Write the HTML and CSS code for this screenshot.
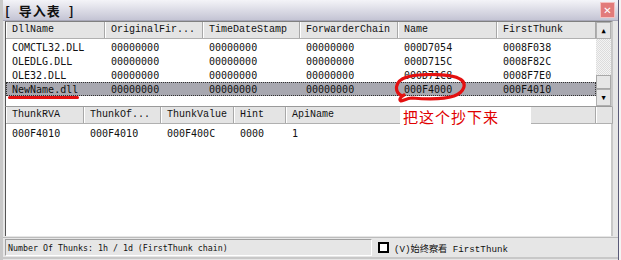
FILE: index.html
```html
<!DOCTYPE html>
<html lang="zh-CN">
<head>
    <meta charset="UTF-8">
    <title>导入表</title>
    <link rel="stylesheet" href="styles.css">
</head>
<body>
    <div class="window">
        <div class="titlebar">
            <span class="title">[&nbsp;&nbsp;导入表&nbsp;&nbsp;]</span>
            <span class="close">&#x2715;</span>
        </div>

        <div class="list top-list">
            <div class="grid dll-grid">
                <div class="row head">
                    <div class="cell">DllName</div>
                    <div class="cell">OriginalFir...</div>
                    <div class="cell">TimeDateStamp</div>
                    <div class="cell">ForwarderChain</div>
                    <div class="cell">Name</div>
                    <div class="cell">FirstThunk</div>
                </div>
                <div class="row">
                    <div class="cell">COMCTL32.DLL</div>
                    <div class="cell">00000000</div>
                    <div class="cell">00000000</div>
                    <div class="cell">00000000</div>
                    <div class="cell">000D7054</div>
                    <div class="cell">0008F038</div>
                </div>
                <div class="row">
                    <div class="cell">OLEDLG.DLL</div>
                    <div class="cell">00000000</div>
                    <div class="cell">00000000</div>
                    <div class="cell">00000000</div>
                    <div class="cell">000D715C</div>
                    <div class="cell">0008F82C</div>
                </div>
                <div class="row">
                    <div class="cell">OLE32.DLL</div>
                    <div class="cell">00000000</div>
                    <div class="cell">00000000</div>
                    <div class="cell">00000000</div>
                    <div class="cell">000D71C8</div>
                    <div class="cell">0008F7E0</div>
                </div>
                <div class="row selected">
                    <div class="cell">NewName.dll</div>
                    <div class="cell">00000000</div>
                    <div class="cell">00000000</div>
                    <div class="cell">00000000</div>
                    <div class="cell">000F4000</div>
                    <div class="cell">000F4010</div>
                </div>
            </div>
            <div class="scrollbar">
                <div class="sb-btn">&#x25B2;</div>
                <div class="sb-track"></div>
                <div class="sb-thumb"></div>
                <div class="sb-btn">&#x25BC;</div>
            </div>
        </div>

        <div class="list bottom-list">
            <div class="grid thunk-grid">
                <div class="row head">
                    <div class="cell">ThunkRVA</div>
                    <div class="cell">ThunkOf...</div>
                    <div class="cell">ThunkValue</div>
                    <div class="cell">Hint</div>
                    <div class="cell">ApiName</div>
                    <div class="cell"></div>
                </div>
                <div class="row">
                    <div class="cell">000F4010</div>
                    <div class="cell">000F4010</div>
                    <div class="cell">000F400C</div>
                    <div class="cell">0000</div>
                    <div class="cell">1</div>
                    <div class="cell"></div>
                </div>
            </div>
        </div>

        <div class="statusbar">
            <div class="status-text">Number Of Thunks: 1h / 1d (FirstThunk chain)</div>
            <span class="checkbox"></span>
            <span class="check-label">(V)始终察看 FirstThunk</span>
        </div>

        <!-- hand drawn notes on the screenshot -->
        <div class="note-line"></div>
        <svg class="note-circle" width="76" height="30" viewBox="0 0 76 30">
            <path d="M10 23 C2 19 2 8 15 4 C32 0 60 1 68 6 C75 10 73 19 62 23 C50 27 32 26 20 25 C15 25 11 28 9 28 C7 27 8 24 12 22"
                  fill="none" stroke="#e41010" stroke-width="3.2" stroke-linecap="round"/>
        </svg>
        <div class="note-text">把这个抄下来</div>
    </div>
</body>
</html>
```

FILE: styles.css
```css
body {
    margin: 0;
    padding: 0;
    width: 621px;
    height: 260px;
    overflow: hidden;
    background-color: #f4f4f4;
    font-family: 'DejaVu Sans Mono', 'Liberation Mono', 'Noto Sans CJK SC', monospace;
    font-size: 10px;
    color: #111;
}
.window {
    position: relative;
    width: 615px;
    height: 260px;
    background-color: #e6e6e6;
    border-left: 3px solid #c8c8c8;
    border-right: 1px solid #5a5a78;
    box-sizing: content-box;
}
.titlebar {
    height: 21px;
    display: flex;
    align-items: center;
    justify-content: space-between;
    background: linear-gradient(#f4f4f8, #c4c4d4);
    border-bottom: 1px solid #a8a8b8;
    box-sizing: border-box;
    padding: 0 2px 0 2px;
}
.title {
    font-family: 'Noto Sans CJK SC', sans-serif;
    font-weight: bold;
    font-size: 13px;
    letter-spacing: 1px;
    color: #111;
}
.close {
    width: 13px;
    height: 14px;
    background-color: #e27a7a;
    border: 1px solid #f4c0c0;
    color: #fff;
    font-size: 10px;
    font-weight: bold;
    font-family: 'DejaVu Sans', sans-serif;
    display: flex;
    align-items: center;
    justify-content: center;
    margin-right: 1px;
}
.list {
    margin-left: 2px;
    width: 608px;
    background-color: #fff;
    border-left: 1px solid #555;
    border-right: 2px solid #c8c8c8;
    box-sizing: border-box;
    display: flex;
}
.top-list {
    height: 85px;
    border-top: 1px solid #808080;
}
.bottom-list {
    height: 130px;
    border-top: 1px solid #9a9a9a;
}
.grid {
    flex: 1;
}
.row {
    display: grid;
    height: 14px;
    align-items: center;
}
.dll-grid .row {
    grid-template-columns: 99px 98px 97px 98px 99px 99px;
}
.thunk-grid .row {
    grid-template-columns: 78px 77px 73px 52px 310px 17px;
}
.row.head {
    height: 17px;
    background-color: #e4e4e4;
    border-bottom: 1px solid #b0b0b0;
    box-sizing: border-box;
    margin-bottom: 1px;
}
.head .cell {
    height: 16px;
    line-height: 16px;
    border-right: 1px solid #a8a8a8;
    box-shadow: inset 1px 0 #fff;
    font-family: 'Liberation Mono', monospace;
    font-size: 10px;
}
.cell {
    padding-left: 6px;
    white-space: nowrap;
    overflow: hidden;
}
.dll-grid .row:nth-child(2) {
    margin-top: 1px;
}
.thunk-grid .row:nth-child(2) {
    margin-top: 2px;
}
.row.selected {
    background-color: #a8a8b0;
    outline: 1px dotted #333;
    outline-offset: -1px;
}
.scrollbar {
    width: 17px;
    display: flex;
    flex-direction: column;
}
.sb-btn {
    height: 17px;
    background-color: #e6e6e6;
    border: 1px solid #b0b0b0;
    box-sizing: border-box;
    font-size: 7px;
    display: flex;
    align-items: center;
    justify-content: center;
    color: #000;
}
.sb-track {
    flex: 1;
    background-color: #eeeeee;
    background-image: repeating-conic-gradient(#dcdcdc 0 25%, #f4f4f4 0 50%);
    background-size: 2px 2px;
}
.sb-thumb {
    height: 14px;
    background-color: #e6e6e6;
    border: 1px solid #a8a8a8;
    box-sizing: border-box;
}
.statusbar {
    height: 22px;
    display: flex;
    align-items: center;
    padding-left: 2px;
    border-top: 1px solid #bcbcbc;
    border-bottom: 2px solid #c8c8c8;
    margin-top: 1px;
    box-sizing: border-box;
}
.status-text {
    width: 367px;
    height: 17px;
    line-height: 17px;
    border: 1px solid #a0a0a0;
    border-right-color: #fff;
    border-bottom-color: #fff;
    box-sizing: border-box;
    padding-left: 2px;
    font-size: 8.3px;
}
.checkbox {
    width: 11px;
    height: 11px;
    border: 2px solid #000;
    background-color: #fff;
    box-sizing: border-box;
    margin-left: 6px;
}
.check-label {
    margin-left: 5px;
    font-family: 'Liberation Mono', 'Noto Sans CJK SC', monospace;
    font-size: 9.2px;
}
.note-line {
    position: absolute;
    left: 5px;
    top: 96px;
    width: 71px;
    height: 3px;
    border-radius: 2px;
    background-color: #e41010;
}
.note-circle {
    position: absolute;
    left: 389px;
    top: 73px;
}
.note-text {
    position: absolute;
    left: 397px;
    top: 107px;
    width: 128px;
    height: 20px;
    padding-left: 3px;
    background-color: #fff;
    color: #e00000;
    font-family: 'Noto Sans CJK SC', sans-serif;
    font-size: 15px;
    line-height: 20px;
    letter-spacing: 1px;
}
```
